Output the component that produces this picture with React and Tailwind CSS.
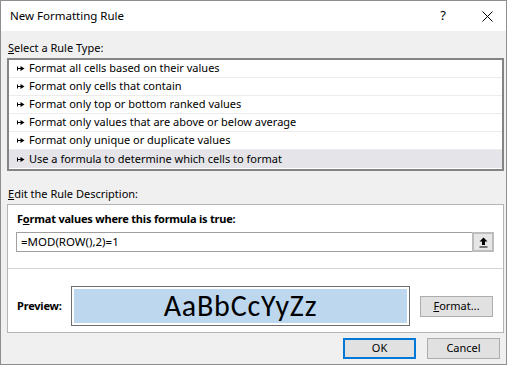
import React from 'react';

const rules = [
  'Format all cells based on their values',
  'Format only cells that contain',
  'Format only top or bottom ranked values',
  'Format only values that are above or below average',
  'Format only unique or duplicate values',
  'Use a formula to determine which cells to format',
];

function RuleArrow() {
  return (
    <svg width="8" height="7" viewBox="0 0 8 7" className="shrink-0">
      <path d="M0.5 1.5v4M0 3.5h4" stroke="#000" strokeWidth="1" />
      <path d="M3.5 1L7.5 3.5L3.5 6Z" fill="#000" />
    </svg>
  );
}

export default function App() {
  return (
    <div
      className="w-[512px] h-[366px] bg-white text-black overflow-hidden"
      style={{ fontFamily: '"Segoe UI", "Noto Sans", sans-serif' }}
    >
      <div className="w-[507px] h-[365px] border border-[#8e8e8e] bg-[#f0f0f0] flex flex-col">
        {/* Title bar */}
        <div className="h-[30px] bg-white flex items-center pl-[9px] shrink-0">
          <span className="text-[11.5px] flex-1">New Formatting Rule</span>
          <span className="text-[13px] w-[12px] mr-[33px] text-center">?</span>
          <svg width="11" height="11" viewBox="0 0 11 11" className="mr-[13px]">
            <path d="M0.5 0.5L10.5 10.5M10.5 0.5L0.5 10.5" stroke="#000" strokeWidth="1" />
          </svg>
        </div>

        {/* Body */}
        <div className="pl-[6px] pr-[2px] flex flex-col">
          <div className="text-[11px] h-[16px] leading-[16px] mt-[9px] mb-[2px] pl-[1px]">
            <span className="underline">S</span>elect a Rule Type:
          </div>

          <div className="border-2 border-[#848484] bg-white pb-[1px] h-[113px]">
            {rules.map((rule, i) => (
              <div
                key={rule}
                className={`h-[18px] flex items-center gap-[4px] pl-[8px] text-[11px] border-b border-[#ececec] ${
                  i === rules.length - 1 ? 'bg-[#e4e4e9] border-b-0' : ''
                }`}
              >
                <RuleArrow />
                <span className="whitespace-nowrap">{rule}</span>
              </div>
            ))}
          </div>

          <div className="text-[11px] h-[16px] leading-[16px] mt-[15px] mb-[2px] pl-[1px]">
            <span className="underline">E</span>dit the Rule Description:
          </div>

          <div className="bg-white border border-[#b4b4b4] h-[129px] flex flex-col">
            <div className="text-[11px] tracking-[-0.2px] font-bold h-[16px] leading-[16px] mt-[6px] pl-[9px]">
              F<span className="underline">o</span>rmat values where this formula is true:
            </div>
            <div className="mt-[5px] ml-[8px] mr-[9px] h-[20px] border border-[#a0a0a0] flex items-center">
              <span className="text-[11.5px] pl-[4px] flex-1">=MOD(ROW(),2)=1</span>
              <div className="w-[22px] h-[20px] -mr-[1px] border-2 border-[#bcbcbc] bg-[#e6e6e6] flex items-center justify-center">
                <svg width="9" height="11" viewBox="0 0 9 11">
                  <path d="M4.5 0.5L8.5 4.5H6V8H3V4.5H0.5Z" fill="#000" />
                  <path d="M0.5 10h8" stroke="#000" strokeWidth="1" />
                </svg>
              </div>
            </div>
            <div className="mt-[16px] border-t border-[#d4d4d4]" />
            <div className="flex items-center mt-[17px]">
              <span className="text-[11px] tracking-[-0.2px] font-bold pl-[9px] w-[63px]">Preview:</span>
              <div className="w-[339px] h-[40px] border border-[#6e6e6e] p-[2px]">
                <div
                  className="h-full bg-[#bdd7ee] flex items-center justify-center text-[30px] tracking-[0.8px] leading-none"
                  style={{ fontFamily: 'Carlito, Lato, sans-serif' }}
                >
                  AaBbCcYyZz
                </div>
              </div>
              <button className="ml-[10px] w-[73px] h-[21px] border border-[#adadad] bg-[#e1e1e1] text-[11px] flex items-center justify-center">
                <span className="underline">F</span>ormat...
              </button>
            </div>
          </div>

          <div className="flex justify-end mt-[5px] gap-[11px] mr-[4px]">
            <button className="w-[73px] h-[21px] border-2 border-[#0078d7] bg-[#e1e1e1] text-[11px] flex items-center justify-center">
              OK
            </button>
            <button className="w-[73px] h-[21px] border border-[#adadad] bg-[#e1e1e1] text-[11px] flex items-center justify-center">
              Cancel
            </button>
          </div>
        </div>
      </div>
    </div>
  );
}
